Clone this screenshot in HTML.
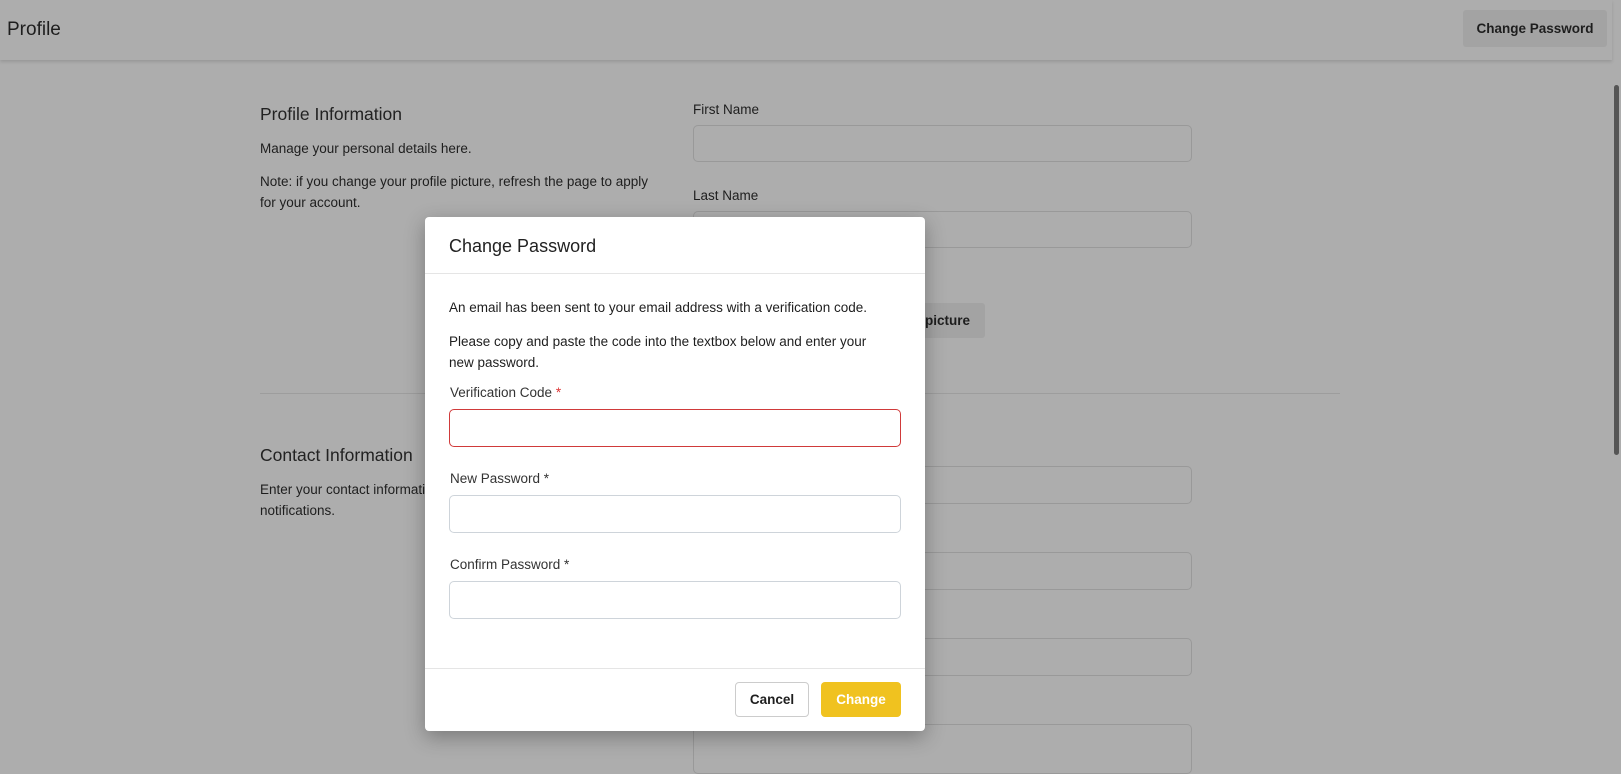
<!DOCTYPE html>
<html><head><meta charset="utf-8"><style>
*{box-sizing:border-box;margin:0;padding:0}
body{width:1621px;height:761px;overflow:hidden;background:#adadad;font-family:"Liberation Sans",sans-serif;color:#1e1e1e;position:relative}
.a{position:absolute}
.hdr{left:0;top:0;width:1612px;height:60px;background:#adadad;box-shadow:0 2px 3px rgba(0,0,0,.12)}
.t{font-size:13.5px;line-height:20px}
.in{border:1px solid #999;border-radius:5px;background:#adadad}
.modal{left:425px;top:217px;width:500px;height:514px;background:#fff;border-radius:4px;box-shadow:0 6px 20px rgba(0,0,0,.3)}
.min{border:1px solid #ced4da;border-radius:5px;background:#fff;left:24px;width:452px;height:38px}
.lbl{left:25px;font-size:13.5px;color:#333}
</style></head><body>
<div class="a hdr"></div>
<div class="a" style="left:7px;top:19px;font-size:19px">Profile</div>
<div class="a" style="left:1463px;top:10px;width:144px;height:37px;background:#a3a3a3;border-radius:3px;font-size:13.5px;font-weight:bold;text-align:center;line-height:37px">Change Password</div>
<div class="a" style="left:1614px;top:85px;width:5px;height:370px;background:#555;border-radius:3px"></div>

<div class="a" style="left:260px;top:104px;font-size:17.5px;color:#222">Profile Information</div>
<div class="a t" style="left:260px;top:139px">Manage your personal details here.</div>
<div class="a t" style="left:260px;top:171px;width:398px;line-height:21px">Note: if you change your profile picture, refresh the page to apply for your account.</div>
<div class="a t" style="left:693px;top:100px">First Name</div>
<div class="a in" style="left:693px;top:125px;width:499px;height:37px"></div>
<div class="a t" style="left:693px;top:186px">Last Name</div>
<div class="a in" style="left:693px;top:211px;width:499px;height:37px"></div>
<div class="a" style="left:880px;top:303px;width:105px;height:35px;background:#a3a3a3;border-radius:3px;font-size:13.5px;font-weight:bold;line-height:35px;text-align:right;padding-right:15px">picture</div>
<div class="a" style="left:260px;top:393px;width:1080px;height:1px;background:#9d9d9d"></div>
<div class="a" style="left:260px;top:445px;font-size:17.5px;color:#222">Contact Information</div>
<div class="a t" style="left:260px;top:479px;line-height:21px">Enter your contact information for<br>notifications.</div>
<div class="a in" style="left:693px;top:466px;width:499px;height:38px"></div>
<div class="a in" style="left:693px;top:552px;width:499px;height:38px"></div>
<div class="a in" style="left:693px;top:638px;width:499px;height:38px"></div>
<div class="a in" style="left:693px;top:724px;width:499px;height:50px"></div>

<div class="a modal">
  <div class="a" style="left:24px;top:19px;font-size:18px;color:#222">Change Password</div>
  <div class="a" style="left:0;top:56px;width:500px;height:1px;background:#e5e5e5"></div>
  <div class="a t" style="left:24px;top:81px">An email has been sent to your email address with a verification code.</div>
  <div class="a t" style="left:24px;top:114px;width:440px;line-height:21px">Please copy and paste the code into the textbox below and enter your new password.</div>
  <div class="a lbl" style="top:168px">Verification Code <span style="color:#d33">*</span></div>
  <div class="a min" style="top:192px;border-color:#d03a3a"></div>
  <div class="a lbl" style="top:254px">New Password *</div>
  <div class="a min" style="top:278px"></div>
  <div class="a lbl" style="top:340px">Confirm Password *</div>
  <div class="a min" style="top:364px"></div>
  <div class="a" style="left:0;top:451px;width:500px;height:1px;background:#e5e5e5"></div>
  <div class="a" style="left:310px;top:465px;width:74px;height:35px;border:1px solid #ccc;border-radius:4px;font-size:13.5px;font-weight:bold;text-align:center;line-height:33px">Cancel</div>
  <div class="a" style="left:396px;top:465px;width:80px;height:35px;background:#f0c21f;border-radius:4px;color:#fff;font-size:13.5px;font-weight:bold;text-align:center;line-height:35px">Change</div>
</div>
</body></html>
